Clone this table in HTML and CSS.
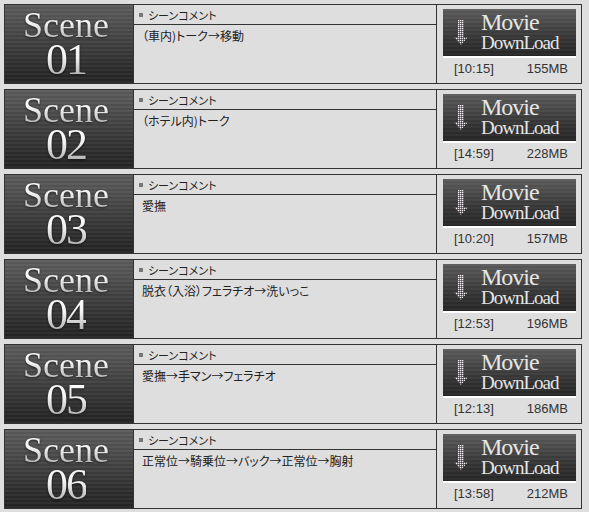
FILE: index.html
```html
<!DOCTYPE html>
<html lang="ja">
<head>
    <meta charset="UTF-8">
    <title>Scene List</title>
    <link rel="stylesheet" href="styles.css">
</head>
<body>
    <div class="scene-list">
        <!-- Scene 01 -->
        <div class="scene">
            <div class="scene-title"><span class="word">Scene</span><span class="num">01</span></div>
            <div class="comment">
                <div class="comment-head"><span class="bullet"></span>シーンコメント</div>
                <div class="comment-body">（車内)トーク→移動</div>
            </div>
            <div class="download">
                <a class="dl-btn" href="#">
                    <svg class="dl-arrow" width="15" height="26" viewBox="0 0 15 26"><defs><pattern id="d1" width="2" height="2" patternUnits="userSpaceOnUse"><rect width="1.3" height="1.3" fill="#f6eef4"/></pattern></defs><polygon points="4,0 10,0 10,17 14,17 7,25 0,17 4,17" fill="url(#d1)"/></svg>
                    <span class="dl-text"><span class="movie">Movie</span><span class="load">DownLoad</span></span>
                </a>
                <div class="dl-info"><span>[10:15]</span><span>155MB</span></div>
            </div>
        </div>

        <!-- Scene 02 -->
        <div class="scene">
            <div class="scene-title"><span class="word">Scene</span><span class="num">02</span></div>
            <div class="comment">
                <div class="comment-head"><span class="bullet"></span>シーンコメント</div>
                <div class="comment-body">（ホテル内)トーク</div>
            </div>
            <div class="download">
                <a class="dl-btn" href="#">
                    <svg class="dl-arrow" width="15" height="26" viewBox="0 0 15 26"><defs><pattern id="d2" width="2" height="2" patternUnits="userSpaceOnUse"><rect width="1.3" height="1.3" fill="#f6eef4"/></pattern></defs><polygon points="4,0 10,0 10,17 14,17 7,25 0,17 4,17" fill="url(#d2)"/></svg>
                    <span class="dl-text"><span class="movie">Movie</span><span class="load">DownLoad</span></span>
                </a>
                <div class="dl-info"><span>[14:59]</span><span>228MB</span></div>
            </div>
        </div>

        <!-- Scene 03 -->
        <div class="scene">
            <div class="scene-title"><span class="word">Scene</span><span class="num">03</span></div>
            <div class="comment">
                <div class="comment-head"><span class="bullet"></span>シーンコメント</div>
                <div class="comment-body">愛撫</div>
            </div>
            <div class="download">
                <a class="dl-btn" href="#">
                    <svg class="dl-arrow" width="15" height="26" viewBox="0 0 15 26"><defs><pattern id="d3" width="2" height="2" patternUnits="userSpaceOnUse"><rect width="1.3" height="1.3" fill="#f6eef4"/></pattern></defs><polygon points="4,0 10,0 10,17 14,17 7,25 0,17 4,17" fill="url(#d3)"/></svg>
                    <span class="dl-text"><span class="movie">Movie</span><span class="load">DownLoad</span></span>
                </a>
                <div class="dl-info"><span>[10:20]</span><span>157MB</span></div>
            </div>
        </div>

        <!-- Scene 04 -->
        <div class="scene">
            <div class="scene-title"><span class="word">Scene</span><span class="num">04</span></div>
            <div class="comment">
                <div class="comment-head"><span class="bullet"></span>シーンコメント</div>
                <div class="comment-body">脱衣（入浴）フェラチオ→洗いっこ</div>
            </div>
            <div class="download">
                <a class="dl-btn" href="#">
                    <svg class="dl-arrow" width="15" height="26" viewBox="0 0 15 26"><defs><pattern id="d4" width="2" height="2" patternUnits="userSpaceOnUse"><rect width="1.3" height="1.3" fill="#f6eef4"/></pattern></defs><polygon points="4,0 10,0 10,17 14,17 7,25 0,17 4,17" fill="url(#d4)"/></svg>
                    <span class="dl-text"><span class="movie">Movie</span><span class="load">DownLoad</span></span>
                </a>
                <div class="dl-info"><span>[12:53]</span><span>196MB</span></div>
            </div>
        </div>

        <!-- Scene 05 -->
        <div class="scene">
            <div class="scene-title"><span class="word">Scene</span><span class="num">05</span></div>
            <div class="comment">
                <div class="comment-head"><span class="bullet"></span>シーンコメント</div>
                <div class="comment-body">愛撫→手マン→フェラチオ</div>
            </div>
            <div class="download">
                <a class="dl-btn" href="#">
                    <svg class="dl-arrow" width="15" height="26" viewBox="0 0 15 26"><defs><pattern id="d5" width="2" height="2" patternUnits="userSpaceOnUse"><rect width="1.3" height="1.3" fill="#f6eef4"/></pattern></defs><polygon points="4,0 10,0 10,17 14,17 7,25 0,17 4,17" fill="url(#d5)"/></svg>
                    <span class="dl-text"><span class="movie">Movie</span><span class="load">DownLoad</span></span>
                </a>
                <div class="dl-info"><span>[12:13]</span><span>186MB</span></div>
            </div>
        </div>

        <!-- Scene 06 -->
        <div class="scene">
            <div class="scene-title"><span class="word">Scene</span><span class="num">06</span></div>
            <div class="comment">
                <div class="comment-head"><span class="bullet"></span>シーンコメント</div>
                <div class="comment-body">正常位→騎乗位→バック→正常位→胸射</div>
            </div>
            <div class="download">
                <a class="dl-btn" href="#">
                    <svg class="dl-arrow" width="15" height="26" viewBox="0 0 15 26"><defs><pattern id="d6" width="2" height="2" patternUnits="userSpaceOnUse"><rect width="1.3" height="1.3" fill="#f6eef4"/></pattern></defs><polygon points="4,0 10,0 10,17 14,17 7,25 0,17 4,17" fill="url(#d6)"/></svg>
                    <span class="dl-text"><span class="movie">Movie</span><span class="load">DownLoad</span></span>
                </a>
                <div class="dl-info"><span>[13:58]</span><span>212MB</span></div>
            </div>
        </div>
    </div>
</body>
</html>
```

FILE: styles.css
```css
* { margin: 0; padding: 0; box-sizing: border-box; }
body {
    background: #dedede;
    color: #222;
    font-family: "Liberation Sans", "Noto Sans CJK JP", sans-serif;
    padding: 4px;
}

.scene-list { display: flex; flex-direction: column; gap: 5px; width: 578px; }
.scene {
    display: grid;
    grid-template-columns: 128px 303px 145px;
    height: 80px;
    border: 1px solid #333;
    background: #dedede;
}

/* left "Scene 01" plate */
.scene-title {
    display: flex;
    flex-direction: column;
    align-items: center;
    padding-top: 4px;
    padding-right: 6px;
    background:
        repeating-linear-gradient(180deg, rgba(255,255,255,0.04) 0 2px, rgba(0,0,0,0.04) 2px 4px),
        linear-gradient(180deg, #5c5c5c 0%, #4f4f4f 25%, #3f3f3f 50%, #303030 75%, #232323 100%);
    font-family: "Liberation Serif", "DejaVu Serif", serif;
}
.scene-title span {
    display: block;
    background: linear-gradient(180deg, #ffffff 0%, #f0f0f0 45%, #a8a8a8 100%);
    -webkit-background-clip: text;
    background-clip: text;
    color: transparent;
    filter: drop-shadow(0 1px 1px rgba(0,0,0,0.6));
}
.word { font-size: 36px; line-height: 33px; }
.num { font-size: 44px; line-height: 36px; letter-spacing: -2px; }

/* middle comment column */
.comment { border-left: 1px solid #333; display: flex; flex-direction: column; }
.comment-head {
    height: 20px;
    border-bottom: 1px solid #333;
    display: flex;
    align-items: center;
    padding-left: 5px;
    font-family: "Noto Sans CJK JP", sans-serif;
    font-feature-settings: "palt";
    font-size: 11px;
    color: #222;
}
.bullet { width: 4px; height: 4px; background: #777; margin-right: 5px; }
.comment-body {
    padding: 3px 8px;
    font-family: "Noto Sans CJK JP", sans-serif;
    font-feature-settings: "palt";
    font-size: 12px;
    line-height: 16px;
    color: #222;
}

/* right download column */
.download { border-left: 1px solid #333; padding: 4px 0 0 6px; }
.dl-btn {
    display: flex;
    width: 133px;
    height: 49px;
    border-bottom: 2px solid #fff;
    text-decoration: none;
    background:
        repeating-linear-gradient(180deg, rgba(255,255,255,0.03) 0 2px, rgba(0,0,0,0.03) 2px 4px),
        linear-gradient(180deg, #5c5c5c 0%, #474747 35%, #343434 65%, #262626 100%);
}
.dl-arrow { margin: 11px 0 0 11px; }
.dl-text {
    display: flex;
    flex-direction: column;
    margin-left: 12px;
    padding-top: 3px;
    font-family: "Liberation Serif", "DejaVu Serif", serif;
    color: #e6e6e6;
}
.movie { font-size: 24px; line-height: 20px; letter-spacing: -1px; }
.load { font-size: 19px; line-height: 21px; letter-spacing: -1px; }

.dl-info {
    display: flex;
    justify-content: space-between;
    margin-top: 3px;
    padding: 0 13px 0 11px;
    font-size: 13px;
    line-height: 16px;
    color: #333;
}
```
